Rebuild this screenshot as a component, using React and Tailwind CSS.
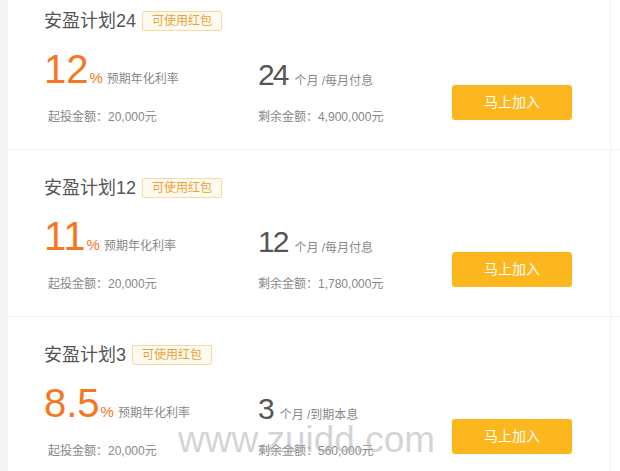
import React from 'react';

const plans = [
  { name: '安盈计划24', rate: '12', term: '24', mode: '/每月付息', left: '4,900,000元' },
  { name: '安盈计划12', rate: '11', term: '12', mode: '/每月付息', left: '1,780,000元' },
  { name: '安盈计划3', rate: '8.5', term: '3', mode: '/到期本息', left: '560,000元' },
];

const font = { fontFamily: '"Liberation Sans", "Noto Sans CJK SC", sans-serif' };

const PlanRow = ({ plan }) => (
  <div className="shrink-0 h-[167px] border-b border-[#f2f2f2] pl-[36px] pt-[28px]">
    {/* title + badge */}
    <div className="flex items-center gap-[6px] h-[20px]">
      <span className="text-[18px] leading-[20px] text-[#555]">{plan.name}</span>
      <span className="h-[20px] px-[9px] border border-[#f9d9a2] bg-[#fffaf0] text-[#eba131] text-[12px] leading-[18px] rounded-[2px]">
        可使用红包
      </span>
    </div>

    <div className="flex mt-[18px]">
      {/* rate */}
      <div className="w-[214px]">
        <div className="flex items-baseline h-[40px]">
          <span className="text-[40px] leading-[40px] text-[#f5771f]">{plan.rate}</span>
          <span className="text-[15px] text-[#f5771f] ml-[1px]">%</span>
          <span className="text-[12px] text-[#888] ml-[4px]">预期年化利率</span>
        </div>
        <div className="mt-[20px] ml-[4px] text-[12px] leading-[16px] text-[#888]">起投金额：20,000元</div>
      </div>

      {/* term */}
      <div className="w-[194px]">
        <div className="flex items-baseline h-[40px] translate-y-[6px]">
          <span className="text-[30px] leading-[40px] tracking-[-2px] text-[#555]">{plan.term}</span>
          <span className="text-[12px] text-[#888] ml-[7px]">个月 {plan.mode}</span>
        </div>
        <div className="mt-[20px] text-[12px] leading-[16px] text-[#888]">剩余金额：{plan.left}</div>
      </div>

      {/* action */}
      <div className="pt-[36px]">
        <button className="w-[120px] h-[35px] rounded-[3px] bg-[#fcb71f] text-white text-[14px]">马上加入</button>
      </div>
    </div>
  </div>
);

export default function App() {
  return (
    <div className="relative w-[620px] h-[471px] overflow-hidden bg-[#f4f4f4] pl-[8px]" style={font}>
      <div className="h-full bg-white relative flex flex-col">
        <div className="absolute top-0 bottom-0 left-[602px] w-px bg-[#f3f3f3]" />
        <div className="-mt-[17px] flex flex-col">
          {plans.map((p) => (
            <PlanRow key={p.name} plan={p} />
          ))}
        </div>
      </div>

      {/* watermark */}
      <div className="absolute left-[178px] top-[421px] text-[37px] leading-none text-[rgba(175,175,180,0.55)] pointer-events-none">
        www.zuidd.com
      </div>
    </div>
  );
}
